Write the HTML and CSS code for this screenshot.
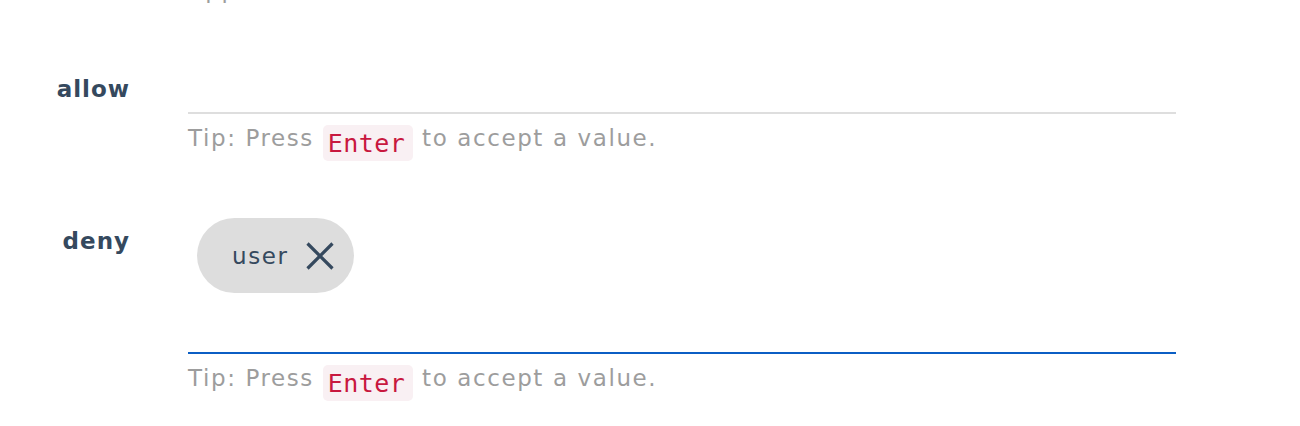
FILE: index.html
```html
<!DOCTYPE html>
<html lang="en">
<head>
<meta charset="utf-8">
<title>Access rules</title>
<link rel="stylesheet" href="styles.css">
</head>
<body>
<div class="form">
  <div class="row row-prev">
    <div class="label"></div>
    <div class="field">
      <div class="tip">Applies to all roles.</div>
    </div>
  </div>

  <div class="row row-allow">
    <label class="label" for="allow">allow</label>
    <div class="field">
      <div class="control">
        <input id="allow" class="input" type="text">
      </div>
      <div class="tip">Tip: Press <code class="kbd">Enter</code> to accept a value.</div>
    </div>
  </div>

  <div class="row row-deny">
    <label class="label" for="deny">deny</label>
    <div class="field">
      <div class="control focused">
        <div class="chips">
          <span class="chip">
            <span class="chip-text">user</span>
            <svg class="chip-x" width="28" height="28" viewBox="0 0 28 28" aria-hidden="true">
              <path d="M1.5 1.5 L26.5 26.5 M26.5 1.5 L1.5 26.5" stroke="#35495e" stroke-width="3.2" fill="none"/>
            </svg>
          </span>
        </div>
        <input id="deny" class="input" type="text">
      </div>
      <div class="tip">Tip: Press <code class="kbd">Enter</code> to accept a value.</div>
    </div>
  </div>
</div>
</body>
</html>
```

FILE: styles.css
```css
html, body {
  margin: 0;
  padding: 0;
  background: #ffffff;
}

body {
  font-family: "DejaVu Sans", "Open Sans", sans-serif;
  color: #35495e;
  overflow: hidden;
}

.form {
  display: flex;
  flex-direction: column;
}

.row {
  display: grid;
  grid-template-columns: 130px 988px;
  column-gap: 58px;
  align-items: start;
}

.row-prev {
  margin-top: -21px;
}

.row-allow {
  margin-top: 53px;
}

.row-deny {
  margin-top: 46px;
}

.label {
  display: block;
  text-align: right;
  font-size: 23px;
  font-weight: 700;
  letter-spacing: 1px;
  line-height: 30px;
  padding-top: 19px;
  color: #35495e;
}

.field {
  display: flex;
  flex-direction: column;
}

.control {
  border-bottom: 2px solid #dedede;
}

.control.focused {
  border-bottom-color: #0b5ec4;
}

.input {
  display: block;
  width: 100%;
  height: 57px;
  padding: 0;
  margin: 0;
  border: none;
  outline: none;
  background: transparent;
  font-family: inherit;
  font-size: 23px;
  color: #35495e;
}

.chips {
  display: flex;
  flex-wrap: wrap;
  padding-left: 9px;
  margin-top: 11px;
  margin-bottom: 2px;
}

.chip {
  display: inline-flex;
  align-items: center;
  gap: 17px;
  height: 75px;
  padding: 0 20px 0 35px;
  border-radius: 38px;
  background: #dddddd;
  box-sizing: border-box;
}

.chip-text {
  font-size: 23px;
  letter-spacing: 1.6px;
  line-height: 30px;
  color: #35495e;
}

.chip-x {
  display: block;
  width: 28px;
  height: 28px;
}

.tip {
  margin-top: 11px;
  font-size: 23px;
  line-height: 23px;
  letter-spacing: 1.6px;
  color: #9d9d9d;
  white-space: nowrap;
}

.row-prev .tip {
  margin-top: 0;
}

.kbd {
  display: inline-block;
  font-family: "DejaVu Sans Mono", "Liberation Mono", monospace;
  font-size: 25px;
  letter-spacing: 0.4px;
  line-height: 20px;
  padding: 9px 8px 7px 5px;
  vertical-align: -6px;
  border-radius: 5px;
  background: #f9f0f3;
  color: #c8183f;
}
```
